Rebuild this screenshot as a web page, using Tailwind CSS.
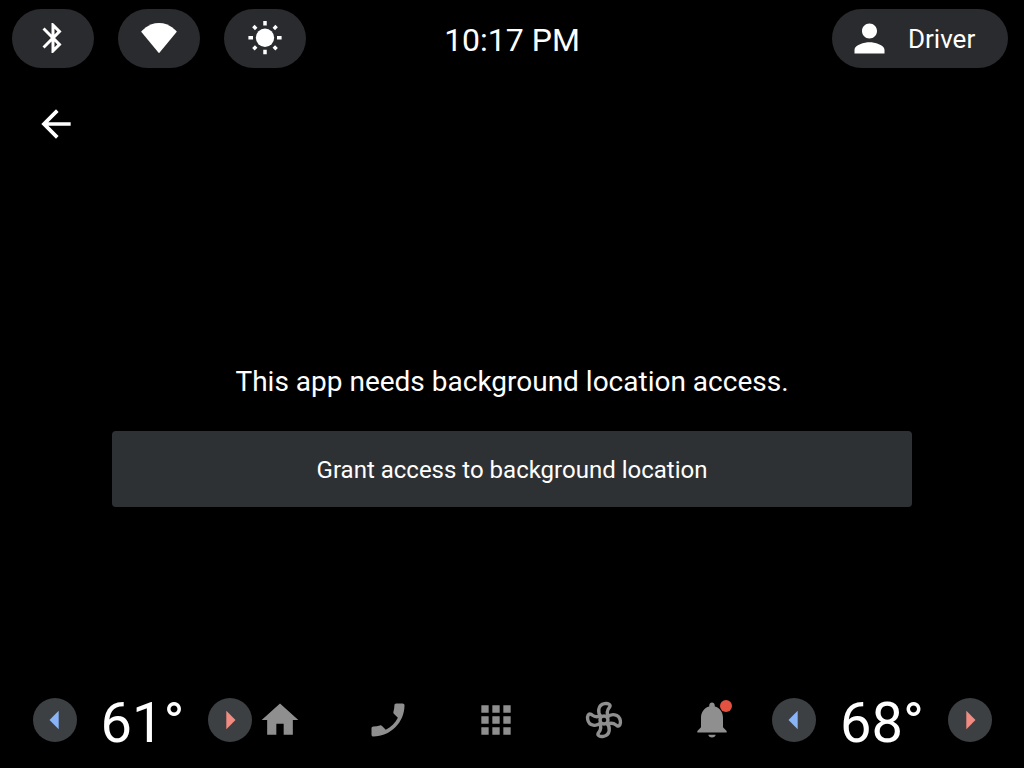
<!DOCTYPE html>
<html lang="en">
<head>
<meta charset="utf-8">
<meta name="viewport" content="width=device-width, initial-scale=1">
<title>Background location access</title>
<script src="https://cdn.jsdelivr.net/npm/@tailwindcss/browser@4"></script>
</head>
<body class="flex min-h-screen flex-col bg-black font-[Roboto,sans-serif] text-white">

<header class="grid h-20 grid-cols-[1fr_auto_1fr] items-center px-3 pb-[3px]">
  <div class="flex gap-6">
    <button type="button" aria-label="Bluetooth" class="flex h-[59px] w-[82px] items-center justify-center rounded-full bg-[#2a2b2e] pb-0.5">
      <svg class="size-9" viewBox="0 0 24 24" fill="currentColor"><path d="M17.71 7.71L12 2h-1v7.59L6.41 5 5 6.41 10.59 12 5 17.59 6.41 19 11 14.41V22h1l5.71-5.71-4.3-4.29 4.3-4.29zM13 5.83l1.88 1.88L13 9.59V5.83zm1.88 10.46L13 18.17v-3.76l1.88 1.88z"/></svg>
    </button>
    <button type="button" aria-label="Wi-Fi" class="flex h-[59px] w-[82px] items-center justify-center rounded-full bg-[#2a2b2e] pb-0.5">
      <svg class="size-9" viewBox="0 0 36 36" fill="currentColor"><path d="M18 33.3L.2 11.700C.2 11.700 7 3 18 3s17.800 8.700 17.800 8.700z"/></svg>
    </button>
    <button type="button" aria-label="Brightness" class="flex h-[59px] w-[82px] items-center justify-center rounded-full bg-[#2a2b2e] pb-0.5">
      <svg class="size-9" viewBox="0 0 36 36" fill="currentColor" stroke="currentColor" stroke-width="3.500"><circle cx="18" cy="17.700" r="9.200" stroke="none"/><path d="M18 1v4.500M18 29.800V34.300M1.400 17.700H6M30 17.700h4.600M6.400 6.100l2.800 2.800M26.800 26.500l2.800 2.800M6.400 29.300L9.200 26.500M26.800 8.900l2.800-2.800"/></svg>
    </button>
  </div>
  <time class="pt-0.5 text-[32px] leading-10">10:17 PM</time>
  <button type="button" class="mr-1 flex h-[59px] w-44 items-center gap-4 justify-self-end rounded-full bg-[#2a2b2e] pl-[15px] text-[26px]">
    <svg class="size-[45px]" viewBox="0 0 24 24" fill="currentColor"><path d="M12 12c2.210 0 4-1.790 4-4s-1.790-4-4-4-4 1.790-4 4 1.790 4 4 4zm0 2c-2.670 0-8 1.340-8 4v2h16v-2c0-2.660-5.330-4-8-4z"/></svg>
    <span class="pt-0.5">Driver</span>
  </button>
</header>

<nav class="flex h-22 items-center px-[34px]" aria-label="Toolbar">
  <button type="button" aria-label="Back">
    <svg class="size-11" viewBox="0 0 24 24" fill="currentColor"><path d="M20 11H7.830l5.590-5.590L12 4l-8 8 8 8 1.410-1.410L7.830 13H20v-2z"/></svg>
  </button>
</nav>

<main class="flex flex-1 flex-col justify-center gap-8 px-28 pt-8">
  <p class="text-center text-[28px] leading-[34px]">This app needs background location access.</p>
  <button type="button" class="h-[76px] w-full rounded bg-[#2e3134] pt-0.5 text-2xl">Grant access to background location</button>
</main>

<footer class="flex h-24 items-center pr-8 pl-[33px]">
  <section class="flex w-[219px] items-center justify-between" aria-label="Driver temperature">
    <button type="button" aria-label="Cooler" class="rounded-full bg-[#3c4043] text-[#8ab4f8]"><svg class="size-11" viewBox="0 0 24 24" fill="currentColor"><path d="M14 7l-5 5 5 5V7z"/></svg></button>
    <output class="pt-1.5 text-[56px] leading-16">61°</output>
    <button type="button" aria-label="Warmer" class="rounded-full bg-[#3c4043] text-[#f28b82]"><svg class="size-11" viewBox="0 0 24 24" fill="currentColor"><path d="M10 17l5-5-5-5v10z"/></svg></button>
  </section>

  <nav class="ml-[6px] flex items-center gap-16 text-[#8f8f8f]" aria-label="System">
    <button type="button" aria-label="Home"><svg class="size-11" viewBox="0 0 24 24" fill="currentColor"><path d="M10 20v-6h4v6h5v-8h3L12 3 2 12h3v8z"/></svg></button>
    <button type="button" aria-label="Phone"><svg class="size-11" viewBox="0 0 24 24" fill="currentColor"><path transform="matrix(-1 0 0 1 24 0)" d="M6.620 10.790c1.440 2.830 3.760 5.140 6.590 6.590l2.200-2.200c.27-.27.67-.36 1.020-.24 1.120.37 2.330.57 3.570.57.55 0 1 .45 1 1V20c0 .55-.45 1-1 1-9.390 0-17-7.610-17-17 0-.55.45-1 1-1h3.500c.55 0 1 .45 1 1 0 1.250.2 2.450.57 3.570.11.35.03.74-.25 1.020l-2.200 2.200z"/></svg></button>
    <button type="button" aria-label="Apps"><svg class="size-11" viewBox="0 0 24 24" fill="currentColor"><path d="M4 8h4V4H4v4zm6 12h4v-4h-4v4zm-6 0h4v-4H4v4zm0-6h4v-4H4v4zm6 0h4v-4h-4v4zm6-10v4h4V4h-4zm-6 4h4V4h-4v4zm6 6h4v-4h-4v4zm0 6h4v-4h-4v4z"/></svg></button>
    <button type="button" aria-label="Fan">
      <svg class="size-11" viewBox="-22 -22 44 44" fill="none" stroke="currentColor" stroke-width="3.400" stroke-linejoin="round">
        <defs><path id="blade" d="M-3-3.500C-6.500-7-6.500-15 .5-16.300 4-17 7-15.500 5.700-13 4.800-11.300 1.500-9.500 4.200-3"/></defs>
        <circle r="4"/>
        <use href="#blade"/><use href="#blade" transform="rotate(90)"/><use href="#blade" transform="rotate(180)"/><use href="#blade" transform="rotate(270)"/>
      </svg>
    </button>
    <button type="button" aria-label="Notifications, new" class="relative">
      <svg class="size-11" viewBox="0 0 24 24" fill="currentColor"><path d="M12 21.500c1.100 0 2-.7 2-1.500h-4c0 .8.890 1.500 2 1.500zm6-5.500v-5c0-3.070-1.640-5.640-4.500-6.320V4c0-.83-.67-1.500-1.500-1.500s-1.500.67-1.500 1.500v.68C7.630 5.360 6 7.920 6 11v5l-2 2v.8h16V18l-2-2z"/></svg>
      <span class="absolute top-2 right-2 size-3 translate-x-1/2 -translate-y-1/2 rounded-full bg-[#e35141]"></span>
    </button>
  </nav>

  <section class="ml-auto flex w-[220px] items-center justify-between" aria-label="Passenger temperature">
    <button type="button" aria-label="Cooler" class="rounded-full bg-[#3c4043] text-[#8ab4f8]"><svg class="size-11" viewBox="0 0 24 24" fill="currentColor"><path d="M14 7l-5 5 5 5V7z"/></svg></button>
    <output class="pt-1.5 text-[56px] leading-16">68°</output>
    <button type="button" aria-label="Warmer" class="rounded-full bg-[#3c4043] text-[#f28b82]"><svg class="size-11" viewBox="0 0 24 24" fill="currentColor"><path d="M10 17l5-5-5-5v10z"/></svg></button>
  </section>
</footer>
</body>
</html>
